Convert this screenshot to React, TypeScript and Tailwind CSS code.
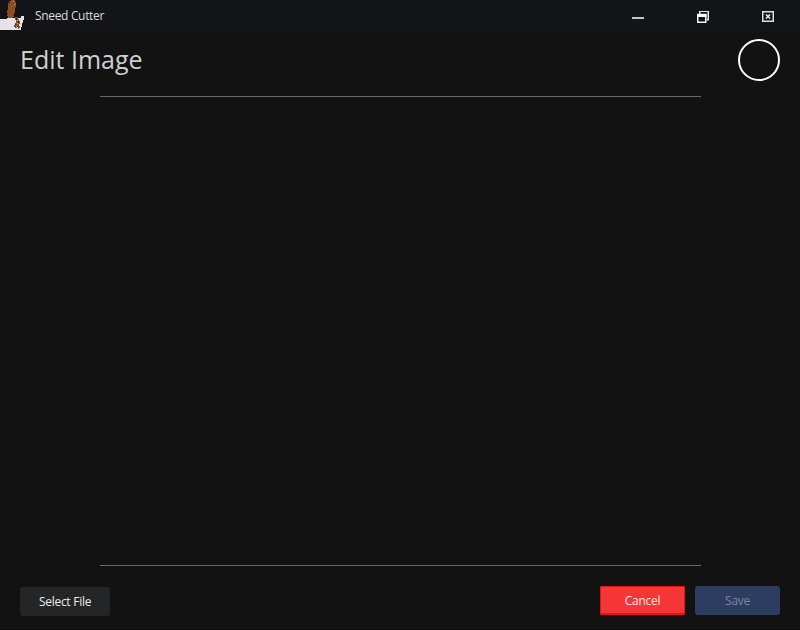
import React from 'react';

function AppLogo() {
  return (
    <svg width="25" height="30" viewBox="0 0 25 30" shapeRendering="crispEdges" aria-hidden="true">
      <path d="M0 19h7v-1h8v1h3v-1h3v-2h3v4h-1v3h-1v4h-1v3H0z" fill="#e5e2e8" />
      <path d="M9 1h2V0h4v2h1v6h-1v5h-1v4h-1v1H8v-2H7v-6h1V3h1z" fill="#8c501f" />
      <path d="M9 2h1v2H9zM13 3h1v1h-1zM15 7h1v1h-1zM7 13h1v2H7zM13 15h1v1h-1z" fill="#5b3317" />
      <path d="M13 1h1v1h-1zM14 4h1v1h-1z" fill="#d0a06e" />
      <path d="M15 17h3v2h1v2h1v3h-1v2h1v2h-1v1h-1v-2h-1v1h-2v-1h-1v-2h1v-2h1v-3h-1z" fill="#795031" />
      <path d="M16 18h1v2h-1zM18 21h1v2h-1zM15 24h1v1h-1zM17 26h1v1h-1z" fill="#35221b" />
      <path d="M17 20h1v1h-1zM17 23h1v1h-1zM16 26h1v1h-1z" fill="#d9b695" />
    </svg>
  );
}

function MinimizeIcon() {
  return (
    <svg width="12" height="12" viewBox="0 0 12 12" aria-hidden="true">
      <path d="M0 6h12v2H0z" fill="#c2c4c6" />
    </svg>
  );
}

function RestoreIcon() {
  return (
    <svg width="12" height="12" viewBox="0 0 12 12" aria-hidden="true">
      <path d="M2.75 3V.25h8.5v8.5H9.5" fill="none" stroke="#e6e6e8" strokeWidth="1.5" />
      <path d="M.75 3.5h8v7.75h-8z" fill="none" stroke="#f4f4f4" strokeWidth="1.5" />
      <path d="M0 3h9.5v3H0z" fill="#fff" />
    </svg>
  );
}

function CloseIcon() {
  return (
    <svg width="12" height="12" viewBox="0 0 12 12" aria-hidden="true">
      <path d="M.75 .75h10.5v9.5H.75z" fill="none" stroke="#dcdddf" strokeWidth="1.5" />
      <path d="M4 3.5l4 4M8 3.5l-4 4" stroke="#f2f2f2" strokeWidth="1.5" />
    </svg>
  );
}

export default function App() {
  return (
    <div className="flex h-[630px] w-[800px] flex-col overflow-hidden border-b border-[#090909] bg-[#121212] font-['Open_Sans','Noto_Sans',sans-serif] text-[12px]">
      <header className="flex h-[30px] shrink-0 items-center bg-[#121418]">
        <AppLogo />
        <span className="ml-[10px] pt-px leading-4 tracking-[-0.33px] text-[#dedede]">Sneed Cutter</span>
        <div className="ml-auto flex gap-[53px] pr-[26px] pt-[3px]">
          <button aria-label="Minimize"><MinimizeIcon /></button>
          <button aria-label="Restore"><RestoreIcon /></button>
          <button aria-label="Close"><CloseIcon /></button>
        </div>
      </header>
      <div className="flex h-[66px] shrink-0 items-start justify-between pl-5 pr-5 pt-[9px]">
        <h1 className="text-[25px] leading-[40px] tracking-[0px] text-[#cfcfcf]">Edit Image</h1>
        <div className="size-[42px] rounded-full border-2 border-white" />
      </div>
      <main className="mx-auto h-[470px] w-[601px] shrink-0 border-y border-[#686868]" />
      <footer className="flex items-start px-5 pt-5">
        <button className="mt-px h-[29px] w-[90px] rounded-[3px] bg-[#242526] tracking-[-0.27px] text-[#ededed]">Select File</button>
        <button className="ml-auto h-[29px] w-[85px] rounded-[1px] border border-b-2 border-[#e51313] bg-[#f53636] pt-px tracking-[-0.3px] text-[#ffe6e6]">Cancel</button>
        <button disabled className="ml-[10px] h-[29px] w-[85px] rounded-[3px] bg-[#2d3d60] tracking-[-0.3px] text-[#7c879f]">Save</button>
      </footer>
    </div>
  );
}
